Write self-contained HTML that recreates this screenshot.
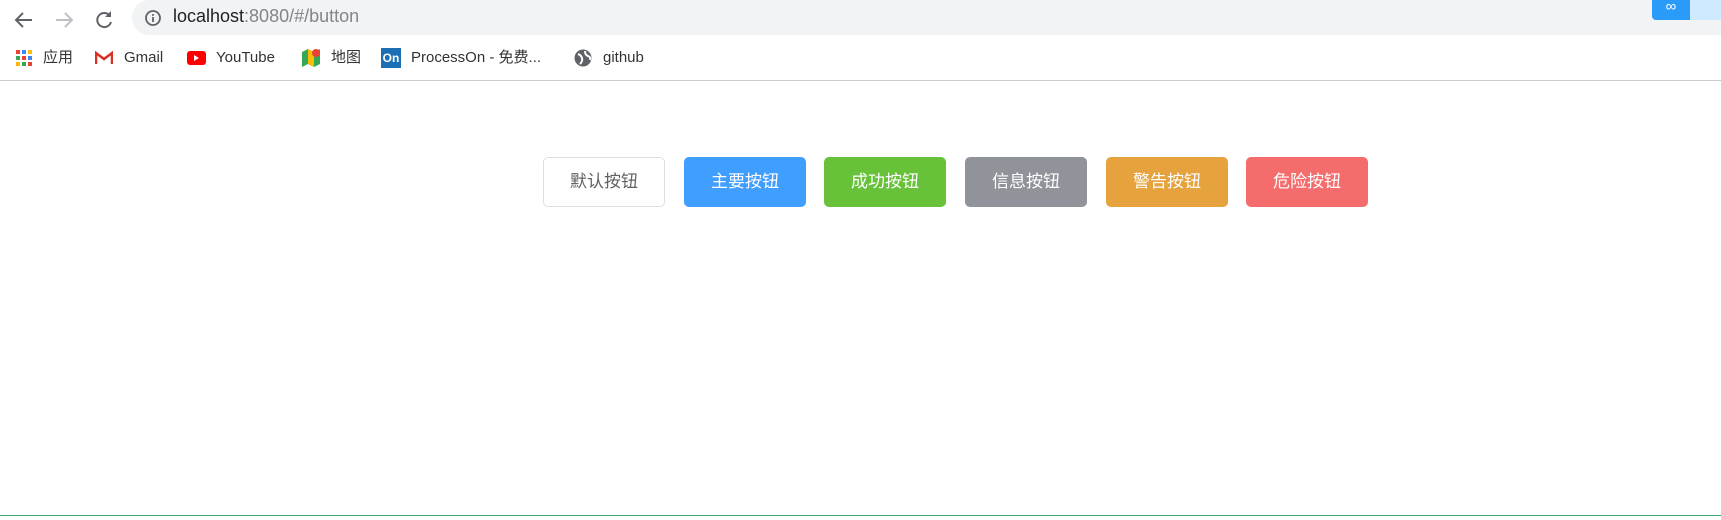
<!DOCTYPE html>
<html><head><meta charset="utf-8"><style>
body{margin:0;width:1721px;height:520px;background:#fff;position:relative;overflow:hidden;font-family:"Liberation Sans","Noto Sans CJK SC",sans-serif;}
.abs{position:absolute}
.pill{left:132px;top:0;width:1600px;height:35px;background:#f1f3f4;border-radius:0 0 0 17px;border-top-left-radius:17px}
.url{left:173px;top:6px;font-size:18px;color:#202124}
.url span{color:#80868b}
.bm{top:48px;height:20px;line-height:20px;font-size:15px;color:#333;font-family:"Liberation Sans","Noto Sans CJK SC",sans-serif}
.sep{left:0;top:80px;width:1721px;height:1px;background:#ccc}
.btn{top:157px;width:122px;height:50px;border-radius:5px;color:#fff;font-size:17px;line-height:46px;text-align:center;font-family:"Noto Sans CJK SC",sans-serif;box-sizing:border-box}
</style></head><body>
<div class="abs pill"></div>
<svg class="abs" style="left:12px;top:8px" width="24" height="24" viewBox="0 0 24 24"><path d="M20 12H5M11 5l-7 7 7 7" stroke="#5f6368" stroke-width="2" fill="none"/></svg>
<svg class="abs" style="left:52px;top:8px" width="24" height="24" viewBox="0 0 24 24"><path d="M4 12h15M13 5l7 7-7 7" stroke="#bdc1c6" stroke-width="2" fill="none"/></svg>
<svg class="abs" style="left:92px;top:8px" width="24" height="24" viewBox="0 0 24 24"><path d="M18 8A7 7 0 1 0 19 14" stroke="#5f6368" stroke-width="2" fill="none"/><path d="M19 3v6h-6z" fill="#5f6368"/></svg>
<svg class="abs" style="left:144px;top:9px" width="18" height="18" viewBox="0 0 18 18"><circle cx="9" cy="9" r="7" stroke="#5f6368" stroke-width="1.8" fill="none"/><rect x="8.1" y="8" width="1.8" height="5" fill="#5f6368"/><rect x="8.1" y="5" width="1.8" height="1.8" fill="#5f6368"/></svg>
<div class="abs url">localhost<span>:8080/#/button</span></div>
<div class="abs" style="left:1652px;top:0;width:69px;height:20px;background:#cfe9ff;border-radius:0 0 0 4px"></div>
<div class="abs" style="left:1652px;top:0;width:38px;height:20px;background:#2a9bf8;border-radius:0 0 0 4px;color:#fff;font-size:15px;text-align:center;line-height:14px">∞</div>
<svg class="abs" style="left:16px;top:50px" width="16" height="16"><rect x="0" y="0" width="4" height="4" fill="#ea4335"/><rect x="6" y="0" width="4" height="4" fill="#4285f4"/><rect x="12" y="0" width="4" height="4" fill="#fbbc05"/><rect x="0" y="6" width="4" height="4" fill="#34a853"/><rect x="6" y="6" width="4" height="4" fill="#ea4335"/><rect x="12" y="6" width="4" height="4" fill="#4285f4"/><rect x="0" y="12" width="4" height="4" fill="#fbbc05"/><rect x="6" y="12" width="4" height="4" fill="#34a853"/><rect x="12" y="12" width="4" height="4" fill="#ea4335"/></svg>
<div class="abs bm" style="left:43px">应用</div>
<svg class="abs" style="left:95px;top:51px" width="18" height="14" viewBox="0 0 18 14"><path d="M1 13V2l8 6 8-6v11" stroke="#d93025" stroke-width="2.5" fill="none"/></svg>
<div class="abs bm" style="left:124px">Gmail</div>
<svg class="abs" style="left:187px;top:51px" width="19" height="14"><rect width="19" height="14" rx="3" fill="#f00"/><path d="M7 4v6l5-3z" fill="#fff"/></svg>
<div class="abs bm" style="left:216px">YouTube</div>
<svg class="abs" style="left:302px;top:48px" width="18" height="19"><path d="M0 4l6-3 6 3 6-3v15l-6 3-6-3-6 3z" fill="#34a853"/><path d="M6 1l6 3v15l-6-3z" fill="#fbbc05"/><circle cx="14" cy="5" r="4" fill="#ea4335"/></svg>
<div class="abs bm" style="left:331px">地图</div>
<div class="abs" style="left:381px;top:48px;width:20px;height:20px;background:#1a6fb5;color:#fff;font-size:12px;font-weight:bold;text-align:center;line-height:20px">On</div>
<div class="abs bm" style="left:411px">ProcessOn - 免费...</div>
<svg class="abs" style="left:574px;top:49px" width="18" height="18"><circle cx="9" cy="9" r="8.5" fill="#5f6368"/><path d="M4 5q3 1 4 4t-2 6M11 2q0 4 3 5t2 4" stroke="#fff" stroke-width="2" fill="none"/></svg>
<div class="abs bm" style="left:603px">github</div>
<div class="abs sep"></div>
<div class="abs btn" style="left:543px;border:1px solid #dcdfe6;color:#606266;background:#fff;line-height:44px">默认按钮</div>
<div class="abs btn" style="left:684px;background:#409eff">主要按钮</div>
<div class="abs btn" style="left:824px;background:#67c23a">成功按钮</div>
<div class="abs btn" style="left:965px;background:#909399">信息按钮</div>
<div class="abs btn" style="left:1106px;background:#e6a23c">警告按钮</div>
<div class="abs btn" style="left:1246px;background:#f56c6c">危险按钮</div>
<div class="abs" style="left:0;top:515px;width:1721px;height:1px;background:#3aa776"></div>
</body></html>
